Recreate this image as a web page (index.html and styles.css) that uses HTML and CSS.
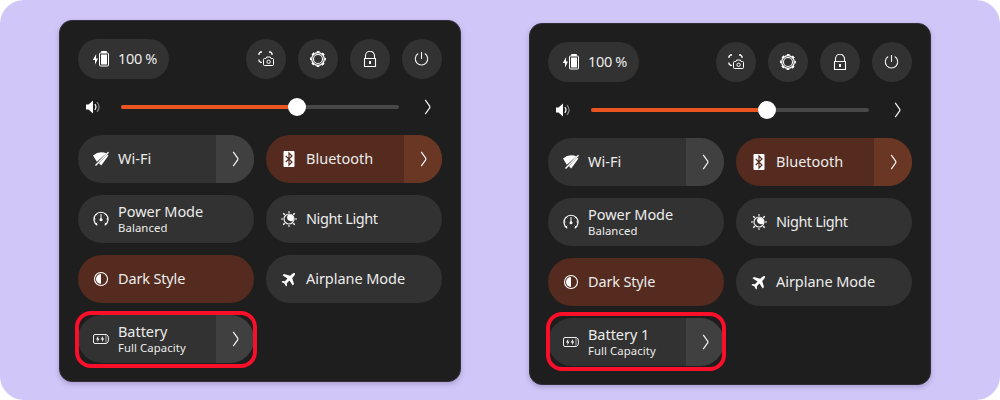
FILE: index.html
```html
<!DOCTYPE html>
<html lang="en">
<head>
<meta charset="utf-8">
<title>Quick Settings</title>
<link rel="stylesheet" href="styles.css">
</head>
<body>
<svg class="sprite" aria-hidden="true">
  <symbol id="charge" viewBox="0 0 18 16"><path d="M4.200 3 .8 9h2.200v4.500L6 7.500H4z" fill="#fff"/><path d="M9.500.5h5v1h-5zM8.500 2h7q1 0 1 1v11q0 1-1 1h-7q-1 0-1-1V3q0-1 1-1z" fill="none" stroke="#fff"/><path d="M9 3.500h6v10H9z" fill="#fff"/></symbol>
  <symbol id="shot" viewBox="0 0 16 16"><g fill="none" stroke="#fff"><path d="M1 4V2.500L2.500 1H4M11 1h1.500L14 2.500V4M1 8.500V10l1.500 1.300H4" stroke-width="1.300"/><path d="M8 7.500 8.700 6h3.600l.7 1.500h1.500q1 0 1 1v5q0 1-1 1h-8q-1 0-1-1v-5q0-1 1-1z"/><circle cx="10.600" cy="10.800" r="1.700"/></g></symbol>
  <symbol id="gear" viewBox="0 0 16 16"><g fill="none" stroke="#fff"><circle cx="8" cy="8" r="7.200" stroke-width="1.500" stroke-dasharray="2.800 2.855" stroke-dashoffset="1.400"/><circle cx="8" cy="8" r="6.300" stroke-width="1.200"/><circle cx="8" cy="8" r="4.500" stroke-width="1.100"/></g></symbol>
  <symbol id="lock" viewBox="0 0 16 16"><path d="M2.500 7.500h11v8h-11zM3.500 7.500V4.800a4.500 4.500 0 0 1 9 0v2.700" fill="none" stroke="#fff" stroke-width="1.100"/><path d="M7 10h2v3H7z" fill="#fff"/></symbol>
  <symbol id="power" viewBox="0 0 16 16"><path d="M7.500 1v7M4.200 2.500a6.200 6.200 0 1 0 6.600 0" fill="none" stroke="#eee" stroke-width="1.100"/></symbol>
  <symbol id="volume" viewBox="0 0 16 16"><path d="M1 5.500h2.500L8 1.500v13l-4.500-4H1z" fill="#fff"/><path d="M9.800 5.200q2.400 2.800 0 5.600" fill="none" stroke="#fff" stroke-width="1.200"/><path d="M12 3.200q4.200 4.800 0 9.600" fill="none" stroke="#888" stroke-width="1.200"/></symbol>
  <symbol id="chevron" viewBox="0 0 8 16"><path d="M1.200.8 5.800 7.300V8.700L1.200 15.200" fill="none" stroke="#f4f4f4" stroke-width="1.150"/></symbol>
  <symbol id="wifi" viewBox="0 0 16 16"><path d="M0 4.500Q6-.5 13.500 2.300L3.800 10.800zM15.500 4.500 8.200 14.500 6 12.300 14 3.700z" fill="#fff"/><path d="M2.500 14.500 15.500 1.200" stroke="#fff" stroke-width="1.400"/></symbol>
  <symbol id="bluetooth" viewBox="0 0 16 16"><rect x="2.500" width="11" height="16" rx="1" fill="#fff"/><path d="m4.800 5 6.200 6-3 3V2l3 3-6.200 6" fill="none" stroke="#542b1e" stroke-width="1.150"/></symbol>
  <symbol id="speed" viewBox="0 0 16 16"><path d="M4.300 14.200A7 7 0 1 1 11.700 14.200" fill="none" stroke="#fff" stroke-width="1.200"/><path d="M1 8h1.500M13.500 8H15M3 3l1.200 1.200M13 3l-1.200 1.200M3 13l1.200-1.200M13 13l-1.200-1.200M8 3v6" stroke="#fff"/><circle cx="8" cy="8.700" r="1.500" fill="#fff"/></symbol>
  <symbol id="night" viewBox="0 0 16 16"><circle cx="8" cy="8" r="5" fill="none" stroke="#eee" stroke-width="1.200"/><path d="M7.300 3.500h1.200A4.700 4.700 0 0 1 12.700 9.200Q11.500 10.500 9.500 10.300 6.500 9.800 6 7 6 4.800 7.300 3.500z" fill="#fff"/><path d="M7 0h2v2H7zM7 14h2v2H7zM0 7h2v2H0zM14 7h2v2h-2z" fill="#999"/><path d="m2.300 2.300 1.400 1.400m8.600 8.600 1.400 1.400m0-11.400-1.400 1.400m-8.600 8.600-1.400 1.400" stroke="#fff" stroke-width="1.500"/></symbol>
  <symbol id="contrast" viewBox="0 0 16 16"><circle cx="8" cy="8" r="6.500" fill="none" stroke="#fff" stroke-width="1.100"/><path d="M8 3v10A5 5 0 0 1 8 3z" fill="#fff"/></symbol>
  <symbol id="plane" viewBox="0 0 16 16"><path d="M14 2q-1.500-.5-3.200 1.200L9.200 4.800 3 3 1.500 4.300l5 3.200-2.600 2.800-2.400-.3L.5 11l3 1.400L5 15.500l1-.9-.2-2.400 2.700-2.600 3.200 5 1.300-1.500-1.800-6.200 1.600-1.600Q14.500 3.500 14 2z" fill="#fff"/></symbol>
  <symbol id="cell" viewBox="0 0 16 16"><path d="M2 3.500h11.500q2 .5 2 4.500t-2 4.500H2Q.5 12.500.5 11V5Q.5 3.500 2 3.500z" fill="none" stroke="#eee"/><path d="M13 4v8" stroke="#aaa"/><path d="M5.300 4.800 3 8.500h1.600L4.300 11.200 6.500 7.500H5zM10 4.800 7.700 8.500h1.600l-.3 2.700 2.200-3.700H9.700z" fill="#fff"/></symbol>
</svg>
<main class="stage">
  <section class="panel">
    <header class="toolbar">
      <button class="charge"><svg class="charge-icon"><use href="#charge"/></svg><span class="label percent">100 %</span></button>
      <button class="round"><svg class="icon"><use href="#shot"/></svg></button>
      <button class="round"><svg class="icon"><use href="#gear"/></svg></button>
      <button class="round"><svg class="icon"><use href="#lock"/></svg></button>
      <button class="round"><svg class="icon"><use href="#power"/></svg></button>
    </header>
    <div class="volume"><svg class="icon"><use href="#volume"/></svg><div class="track"><div class="fill"></div><div class="thumb"></div></div><svg class="chevron"><use href="#chevron"/></svg></div>
    <div class="tiles">
      <div class="tile"><svg class="icon"><use href="#wifi"/></svg><span class="label wifi">Wi-Fi</span><div class="more"><svg class="chevron"><use href="#chevron"/></svg></div></div>
      <div class="tile active"><svg class="icon"><use href="#bluetooth"/></svg><span class="label bluetooth">Bluetooth</span><div class="more"><svg class="chevron"><use href="#chevron"/></svg></div></div>
      <div class="tile"><svg class="icon"><use href="#speed"/></svg><div class="stack"><span class="label mode">Power Mode</span><span class="sub">Balanced</span></div></div>
      <div class="tile"><svg class="icon"><use href="#night"/></svg><span class="label night">Night Light</span></div>
      <div class="tile active"><svg class="icon"><use href="#contrast"/></svg><span class="label dark">Dark Style</span></div>
      <div class="tile"><svg class="icon"><use href="#plane"/></svg><span class="label plane">Airplane Mode</span></div>
      <div class="slot"><div class="tile"><svg class="icon"><use href="#cell"/></svg><div class="stack"><span class="label battery">Battery</span><span class="sub">Full Capacity</span></div><div class="more"><svg class="chevron"><use href="#chevron"/></svg></div></div><div class="highlight"></div></div>
    </div>
  </section>
  <section class="panel second">
    <header class="toolbar">
      <button class="charge"><svg class="charge-icon"><use href="#charge"/></svg><span class="label percent">100 %</span></button>
      <button class="round"><svg class="icon"><use href="#shot"/></svg></button>
      <button class="round"><svg class="icon"><use href="#gear"/></svg></button>
      <button class="round"><svg class="icon"><use href="#lock"/></svg></button>
      <button class="round"><svg class="icon"><use href="#power"/></svg></button>
    </header>
    <div class="volume"><svg class="icon"><use href="#volume"/></svg><div class="track"><div class="fill"></div><div class="thumb"></div></div><svg class="chevron"><use href="#chevron"/></svg></div>
    <div class="tiles">
      <div class="tile"><svg class="icon"><use href="#wifi"/></svg><span class="label wifi">Wi-Fi</span><div class="more"><svg class="chevron"><use href="#chevron"/></svg></div></div>
      <div class="tile active"><svg class="icon"><use href="#bluetooth"/></svg><span class="label bluetooth">Bluetooth</span><div class="more"><svg class="chevron"><use href="#chevron"/></svg></div></div>
      <div class="tile"><svg class="icon"><use href="#speed"/></svg><div class="stack"><span class="label mode">Power Mode</span><span class="sub">Balanced</span></div></div>
      <div class="tile"><svg class="icon"><use href="#night"/></svg><span class="label night">Night Light</span></div>
      <div class="tile active"><svg class="icon"><use href="#contrast"/></svg><span class="label dark">Dark Style</span></div>
      <div class="tile"><svg class="icon"><use href="#plane"/></svg><span class="label plane">Airplane Mode</span></div>
      <div class="slot"><div class="tile"><svg class="icon"><use href="#cell"/></svg><div class="stack"><span class="label battery">Battery 1</span><span class="sub">Full Capacity</span></div><div class="more"><svg class="chevron"><use href="#chevron"/></svg></div></div><div class="highlight"></div></div>
    </div>
  </section>
</main>
</body>
</html>
```
FILE: styles.css
```css
* { box-sizing: border-box; }
body { margin: 0; background: #fff; font-family: "Noto Sans", sans-serif; color: #ececec; }
.sprite { display: none; }
.stage { width: 1000px; height: 400px; display: flex; align-items: flex-start; gap: 68px; padding: 20px 59px; background: #d0c6f7; border-radius: 24px; }
.panel { width: 402px; height: 362px; padding: 18px; background: #1e1e1e; border: 1px solid #302e36; border-radius: 13px; box-shadow: 0 2px 5px rgba(65, 50, 100, .28); }
.second { margin-top: 3px; }
.toolbar { display: flex; gap: 12px; }
button { border: 0; padding: 0; color: inherit; font: inherit; background: #323232; }
.charge { width: 91px; height: 40px; border-radius: 20px; display: flex; align-items: center; padding-left: 14px; gap: 8px; margin-right: auto; }
.charge-icon { width: 18px; height: 16px; flex: none; }
.round { width: 40px; height: 40px; border-radius: 50%; display: flex; align-items: center; justify-content: center; }
.icon { width: 16px; height: 16px; flex: none; display: block; }
.volume { height: 56px; display: flex; align-items: center; padding: 0 10px 0 7px; }
.track { width: 278px; height: 4px; border-radius: 2px; background: #484848; margin: 0 25px 0 20px; display: flex; align-items: center; flex: none; }
.fill { width: 167px; height: 4px; background: #e95420; border-radius: 2px 0 0 2px; }
.thumb { width: 18px; height: 18px; border-radius: 50%; background: #fff; flex: none; }
.chevron { width: 8px; height: 16px; flex: none; display: block; }
.tiles { display: grid; grid-template-columns: 176px 176px; grid-auto-rows: 48px; gap: 12px; }
.tile { height: 48px; border-radius: 24px; display: flex; align-items: center; gap: 9px; padding-left: 15px; background: #323232; overflow: hidden; }
.active { background: #542b1e; }
.more { width: 38px; height: 48px; margin-left: auto; padding-left: 1px; background: #404040; display: flex; align-items: center; justify-content: center; }
.active .more { background: #6b3725; }
.label { font-size: 14.5px; line-height: 20px; white-space: nowrap; padding-bottom: 2px; }
.percent { letter-spacing: -.35px; }
.night { letter-spacing: -.4px; }
.dark { letter-spacing: -.15px; }
.mode, .plane, .battery { letter-spacing: -.05px; }
.stack { display: flex; flex-direction: column; padding-bottom: 2px; }
.stack .label { line-height: 18px; padding-bottom: 1px; }
.sub { font-size: 11.3px; line-height: 14px; letter-spacing: .1px; white-space: nowrap; }
.slot { position: relative; }
.highlight { position: absolute; top: -4px; left: -3px; width: 182px; height: 57px; border: 4px solid #f90f29; border-radius: 16px; }
.second .highlight { top: -6px; left: -2px; width: 180px; height: 59px; }
```
